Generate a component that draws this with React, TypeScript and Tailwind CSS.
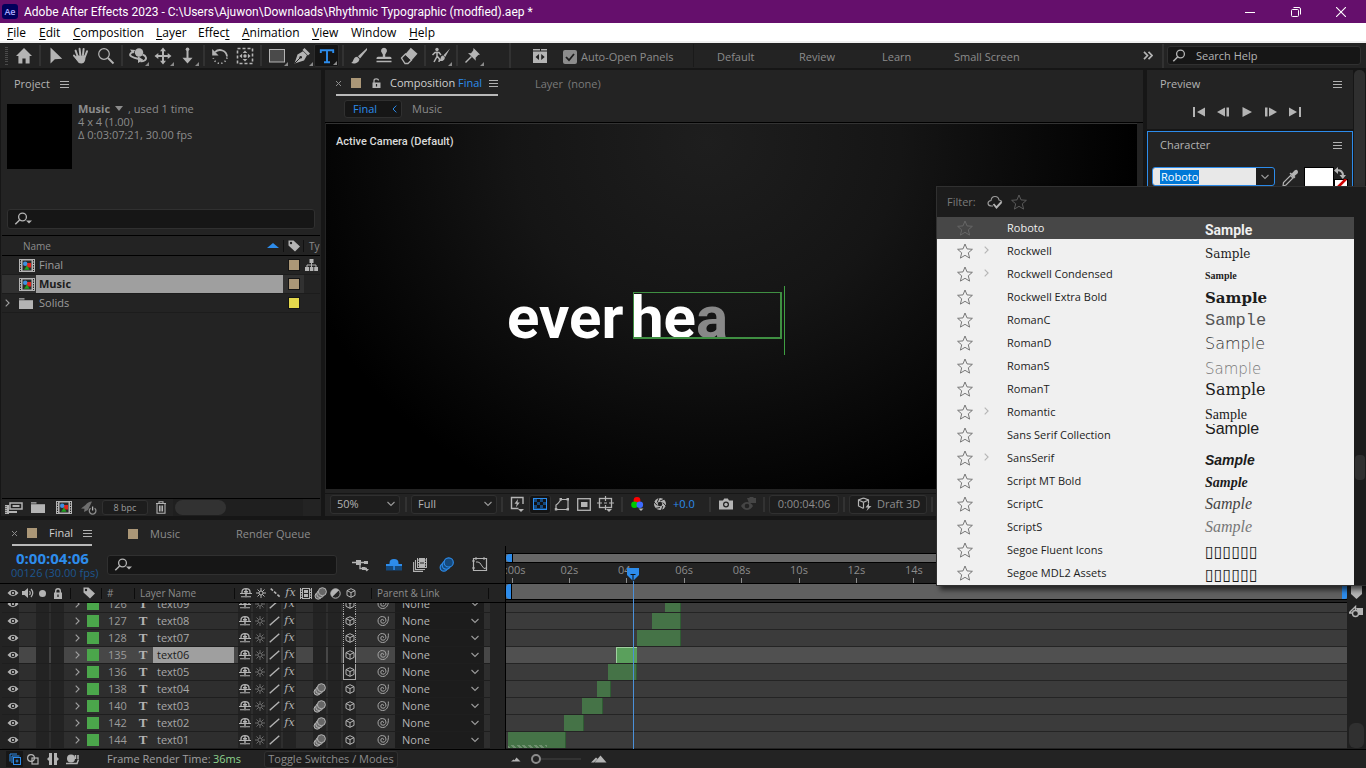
import type { ReactNode } from "react";

/* ---------- icon helpers ---------- */

type IconProps = { className?: string };

function Svg({ w = 16, h = 16, vb, className = "", children }: { w?: number; h?: number; vb?: string; className?: string; children: ReactNode }) {
  return (
    <svg width={w} height={h} viewBox={vb ?? `0 0 ${w} ${h}`} className={`shrink-0 ${className}`} fill="none" stroke="none" aria-hidden="true">
      {children}
    </svg>
  );
}

const HomeIcon = () => (
  <Svg w={18} h={18}><path d="M9 1 1 9h2.4v7.5h4v-5h3.2v5h4V9H17Z" fill="#b4b4b4" /></Svg>
);
const ArrowIcon = () => (
  <Svg w={18} h={18}><path d="M3.5 0.5v16l4.3-4.3 7.4-.5Z" fill="#b4b4b4" /></Svg>
);
const HandIcon = () => (
  <Svg w={18} h={18}>
    <path d="M5.5 9 3.6 3.6M8.3 8 7.6 1.8M11 8l.6-6M13 9.5l2-5.2M5.5 12.5 2 8.6" stroke="#b4b4b4" strokeWidth="2" strokeLinecap="round" />
    <path d="M4.6 8.4h9.2l-.6 4.6q-1 3.6-4 3.6-2.800 0-4-2.600L3.400 11Z" fill="#b4b4b4" />
  </Svg>
);
const ZoomIcon = () => (
  <Svg w={18} h={18}><circle cx="7" cy="7" r="5.300" stroke="#b4b4b4" strokeWidth="1.200" /><path d="m11 11 5.500 5.500" stroke="#b4b4b4" strokeWidth="2" /></Svg>
);
const OrbitIcon = () => (
  <Svg w={20} h={18}>
    <circle cx="11" cy="5.500" r="4.200" fill="#b4b4b4" />
    <path d="M6 4.500C2 5.500 1 8 3.500 9.500s5 2 7.500 2.500M14.500 7.500c4 1.500 4.500 4.500 2 6q-2 1-4 .7" stroke="#b4b4b4" strokeWidth="1.900" />
    <path d="m10 9.300 5.500 3.700-5.500 3Z M2 2.600 7.200 3 5 6.800Z" fill="#b4b4b4" />
  </Svg>
);
const PanIcon = () => (
  <Svg w={18} h={18}>
    <path d="M9 3v12M3 9h12" stroke="#b4b4b4" strokeWidth="2" />
    <path d="m9 .5 3 3.800H6ZM9 17.500l3-3.800H6ZM.5 9l3.800-3v6ZM17.500 9l-3.800-3v6Z" fill="#b4b4b4" />
  </Svg>
);
const DollyIcon = () => (
  <Svg w={18} h={18}><path d="M8.500 1.500V12" stroke="#b4b4b4" strokeWidth="2" /><path d="m8.500 16.500 5-5.800h-10Z" fill="#b4b4b4" /><circle cx="8.500" cy="2.300" r="1.800" fill="#b4b4b4" /></Svg>
);
const RotateIcon = () => (
  <Svg w={18} h={18}>
    <path d="M4 5.200A7 7 0 0 1 16 9.500" stroke="#b4b4b4" strokeWidth="1.800" />
    <path d="M16 10.500A7 7 0 0 1 2.300 11" stroke="#b4b4b4" strokeWidth="1.600" strokeDasharray="1.300 2.300" />
    <path d="M1.200 2v6.400h6.400Z" fill="#b4b4b4" />
  </Svg>
);
const AnchorIcon = () => (
  <Svg w={18} h={18}>
    <rect x="1.500" y="1.500" width="15" height="15" stroke="#b4b4b4" strokeWidth="1.600" strokeDasharray="3 2" />
    <circle cx="9" cy="9" r="1.700" fill="#b4b4b4" />
    <path d="m9 3.400 2.300 2.700H6.700ZM9 14.600l2.300-2.700H6.700ZM3.400 9l2.700-2.300v4.600ZM14.600 9l-2.700-2.300v4.600Z" fill="#b4b4b4" />
  </Svg>
);
const RectIcon = () => (
  <Svg w={18} h={18}><rect x="1.500" y="2.500" width="15" height="12.500" fill="#4a4a4a" stroke="#b4b4b4" /></Svg>
);
const PenIcon = () => (
  <Svg w={18} h={18}><path d="m1.500 16.500 3-9L10 4.200l4 4-3 5.300Z" fill="#b4b4b4" /><path d="m2 16 5-5" stroke="#232323" /><circle cx="7.700" cy="10.200" r="1.300" fill="#232323" /><path d="m11.500 1 5.500 5.500-2 2L9.500 3Z" fill="#b4b4b4" /></Svg>
);
const TypeIcon = () => (
  <Svg w={16} h={16}><path d="M1.800 5V2.200h12.400V5M8 2.200v12M5 14.300h6" stroke="#2d8ceb" strokeWidth="1.900" /></Svg>
);
const BrushIcon = () => (
  <Svg w={18} h={18}><path d="M17 1 8 9.300l2 2.200L17 3Z" fill="#b4b4b4" /><path d="M7.200 9.800c-4 0-3.200 4.700-6 6.300 4.500 1 8-.8 8.200-4.200Z" fill="#b4b4b4" /></Svg>
);
const StampIcon = () => (
  <Svg w={18} h={18}><path d="M9 .8a3 3 0 0 1 2.200 5l-1 1.700v2.300H15q1.500 0 1.500 1.500V12h-15v-.7q0-1.500 1.500-1.500h4.800V7.500l-1-1.700A3 3 0 0 1 9 .8ZM1.500 13.700h15v1.500h-15Z" fill="#b4b4b4" /></Svg>
);
const EraserIcon = () => (
  <Svg w={18} h={18}><path d="m1.500 11 4-4 6 6-3.500 3.500H5Z" stroke="#b4b4b4" strokeWidth="1.300" /><path d="m5 7.500 5.800-6.700 6.700 6-6 6.700Z" fill="#b4b4b4" /></Svg>
);
const RotoIcon = () => (
  <Svg w={20} h={18}>
    <circle cx="6" cy="2.500" r="1.700" fill="#b4b4b4" />
    <path d="M6 4.500v5L3 15M6 9l2.500 3-.5 3M1.500 8 4 5.500h4l2 2.500" stroke="#b4b4b4" strokeWidth="1.500" />
    <path d="m19 1.500-6.500 6.800 1.700 1.700Z M12 8.500c-3 .5-1.800 4-4 5.500 4 .5 6-1 5.800-3.800Z" fill="#b4b4b4" />
  </Svg>
);
const PinIcon = () => (
  <Svg w={18} h={18}><path d="m9.500 1 6.500 6.500-1.800.6-2.600 2.600.2 3L4 6l3 .2 2.200-2.600Z" fill="#b4b4b4" /><path d="m7.500 9.500-6 6" stroke="#b4b4b4" strokeWidth="1.500" /></Svg>
);
const PanelsIcon = () => (
  <Svg w={16} h={16}><path d="M1 1h7v1.500H1Zm8 0h6v1.500H9ZM1 3.500h14V15H1Z" fill="#b4b4b4" /><path d="m7 6-3.500 3L7 12ZM9.200 6l3.500 3-3.500 3Z" fill="#232323" /></Svg>
);
const SearchIcon = ({ caret = false }: { caret?: boolean }) => (
  <Svg w={20} h={14}>
    <circle cx="8.500" cy="5" r="3.900" stroke="#b4b4b4" strokeWidth="1.300" />
    <path d="m5.600 8-4.300 4.200" stroke="#b4b4b4" strokeWidth="1.500" />
    {caret && <path d="M12 8.500h6l-3 3Z" fill="#b4b4b4" />}
  </Svg>
);
const Burger = () => (
  <Svg w={9} h={9}><path d="M0 1.500h9M0 4.500h9M0 7.500h9" stroke="#b0b0b0" strokeWidth="1" /></Svg>
);
const TagIcon = () => (
  <Svg w={14} h={12}><path d="M1.500.5h5l6.500 6-5 5-6.500-6Z" fill="#b4b4b4" /><circle cx="4" cy="3" r="1.200" fill="#232323" /></Svg>
);
const CompIcon = () => (
  <Svg w={16} h={13}>
    <rect width="16" height="13" fill="#b4b4b4" />
    <path d="M1.500 1v11M14.500 1v11" stroke="#232323" strokeWidth="1" strokeDasharray="1.500 1" />
    <rect x="3.500" y="1.500" width="9" height="10" fill="#2a2a2a" />
    <rect x="7.500" y="4" width="4.500" height="4.500" fill="#e2231a" /><circle cx="6.200" cy="4.800" r="2.200" fill="#3d8fe0" /><path d="m8 6.500 2.500 4.300h-5.500Z" fill="#1fa01f" />
  </Svg>
);
const FolderIcon = () => (
  <Svg w={14} h={11}><path d="M0 .3h5.500V2H14v9H0Z" fill="#b4b4b4" /><path d="M0 1.800h14" stroke="#232323" strokeWidth=".7" /></Svg>
);
const TreeIcon = () => (
  <Svg w={13} h={12}><path d="M4.500 0h4v4h-4ZM0 8h4v4H0ZM4.800 8h3.600v4H4.800ZM9.200 8H13v4H9.200Z" fill="#b4b4b4" /><path d="M6.500 4v4M2 8V6h9v2" stroke="#b4b4b4" /></Svg>
);
const InterpretIcon = () => (
  <Svg w={18} h={12}><path d="M0 3h4v9H0Z" fill="#b4b4b4" /><path d="M1 4v8" stroke="#232323" strokeDasharray="1 1" /><rect x="5" y="1" width="12" height="6" stroke="#b4b4b4" strokeWidth="1.500" /><path d="M7.500 4h7M4 10h8" stroke="#b4b4b4" strokeWidth="2" /></Svg>
);
const RocketIcon = () => (
  <Svg w={18} h={14}><path d="M12 .5Q8 .5 5.500 4L1 7.500l3.500.3L4 11l4-2Z" fill="#6e6e6e" /><path d="M10.600 7.200a3.300 3.300 0 1 0 4 0" stroke="#8c8c8c" strokeWidth="1.300" /><path d="M12.600 5.500v4" stroke="#b4b4b4" strokeWidth="1.300" /></Svg>
);
const TrashIcon = () => (
  <Svg w={12} h={13}><path d="M1 2.500h10M4 2V.7h4V2M2 3v9.300h8V3M4.500 4.500v6M6 4.500v6M7.500 4.500v6" stroke="#b4b4b4" strokeWidth="1.100" /></Svg>
);
const Chevron = ({ className = "" }: IconProps) => (
  <Svg w={8} h={6} className={className}><path d="m.5 1 3.500 3.500L7.500 1" stroke="#9a9a9a" strokeWidth="1.100" /></Svg>
);
const ChevronRight = ({ color = "#a0a0a0" }: { color?: string }) => (
  <Svg w={5} h={8}><path d="m.7.600 3.400 3.400L.7 7.400" stroke={color} strokeWidth="1.100" /></Svg>
);
const StarIcon = ({ color }: { color: string }) => (
  <Svg w={16} h={16}><path d="m8 1 2 4.900 5.400.4-4.100 3.500 1.300 5.300L8 12.300l-4.600 2.800 1.300-5.300L.6 6.300 6 5.900Z" stroke={color} strokeWidth="1" /></Svg>
);
const CubeIcon = () => (
  <Svg w={10} h={10}><path d="M5 .7 9 2.600v4.800L5 9.300 1 7.400V2.600ZM1 2.600l4 2 4-2M5 4.600v4.700" stroke="#b4b4b4" /></Svg>
);
const EyeIcon = () => (
  <Svg w={12} h={8}><path d="M.5 4Q3 .8 6 .8T11.500 4Q9 7.200 6 7.200T.5 4Z" fill="#b4b4b4" /><circle cx="6" cy="4" r="2.300" fill="#232323" /><circle cx="6" cy="4" r="1" fill="#d0d0d0" /></Svg>
);
const ShyIcon = ({ color = "#b4b4b4" }: { color?: string }) => (
  <Svg w={12} h={10}><path d="M2 5V4q0-3.300 4-3.300T10 4v1" stroke={color} strokeWidth="1.300" /><path d="M4 3h4v1.500H4ZM5.300 1h1.400v8.500H5.300Z" fill={color} /><path d="M0 5.500h12M1 8.800h4M7 8.800h4" stroke={color} strokeWidth="1.100" /></Svg>
);
const SunIcon = ({ color }: { color: string }) => (
  <Svg w={10} h={10}><path d="M5 0v10M0 5h10M1.500 1.500l7 7M8.500 1.500l-7 7" stroke={color} /><circle cx="5" cy="5" r="2" fill="#232323" stroke={color} /></Svg>
);
const SlashIcon = () => (<Svg w={11} h={10}><path d="M.7 9.300 10.300.7" stroke="#b4b4b4" strokeWidth="1.400" /></Svg>);
const QualityIcon = () => (<Svg w={11} h={10}><path d="m.7.700 9.600 8.600" stroke="#b4b4b4" strokeWidth="1.600" strokeDasharray="3 1.500" /></Svg>);
const BlurIcon = ({ stroke = "#b4b4b4", fill = "#666666", size = 13 }: { stroke?: string; fill?: string; size?: number }) => (
  <Svg w={size} h={size} vb="0 0 13 13"><circle cx="4.200" cy="9" r="3.200" fill={fill} stroke={stroke} /><circle cx="6.300" cy="7" r="3.600" fill={fill} stroke={stroke} /><circle cx="8.400" cy="4.700" r="4" fill={fill} stroke={stroke} /></Svg>
);
const FilmIcon = () => (
  <Svg w={12} h={11}><rect x="0" y="0" width="12" height="11" fill="#b4b4b4" /><path d="M1.500 0v11M10.500 0v11" stroke="#232323" strokeDasharray="1.500 1" /><rect x="3.500" y="1.500" width="5" height="8" stroke="#232323" /><path d="M4 5.500h4" stroke="#232323" /></Svg>
);
const AdjustIcon = () => (<Svg w={11} h={11}><circle cx="5.500" cy="5.500" r="4.700" stroke="#b4b4b4" /><path d="M9 2.200A4.700 4.700 0 0 0 2.200 9Z" fill="#b4b4b4" /></Svg>);
const SpeakerIcon = () => (<Svg w={12} h={10}><path d="M0 3h2.500L6 0v10L2.500 7H0Z" fill="#b4b4b4" /><path d="M7.500 3q1.500 2 0 4M9 1q3.500 4 0 8" stroke="#b4b4b4" strokeWidth="1.200" /></Svg>);
const LockIcon = () => (<Svg w={10} h={11}><path d="M1 4.500h8V11H1Z" fill="#b4b4b4" /><path d="M2.700 5V3q0-2.200 2.300-2.200T7.300 3v2" stroke="#b4b4b4" strokeWidth="1.400" /><path d="M5 6.500v2.500" stroke="#232323" strokeWidth="1.300" /></Svg>);
const UnlockIcon = () => (<Svg w={9} h={11}><path d="M.5 4.500h8V10h-8Z" fill="#b4b4b4" /><path d="M2 5V2.800Q2 .8 4.200.8T6.500 2.500" stroke="#b4b4b4" strokeWidth="1.200" /><path d="M4.500 6v2.500" stroke="#232323" strokeWidth="1.200" /></Svg>);
const SwirlIcon = () => (
  <Svg w={12} h={12}><path d="M11.300 1.500c.5 5-1.500 9-5.600 9A4.600 4.600 0 0 1 1 6a4.200 4.200 0 0 1 4.300-4.500A3.600 3.600 0 0 1 9 5c0 2-1.300 3.200-3 3.200A2 2 0 0 1 3.800 6q0-1.500 1.500-1.700 1.300 0 1.300 1.500" stroke="#a4a4a4" /></Svg>
);
const Mountain = ({ big = false }: { big?: boolean }) => big
  ? <Svg w={16} h={8}><path d="m0 7.500 5-5 1.500 1.200L3 7.500ZM3.500 7.500 9.500.5l6 7Z" fill="#b4b4b4" /></Svg>
  : <Svg w={10} h={5}><path d="m0 4.500 2.500-2 1 .7L5.500.5l4 4Z" fill="#b4b4b4" /></Svg>;

/* ---------- shared pieces ---------- */

const Sep = ({ width = "w-[10px]" }: { width?: string }) => (
  <span className={`flex shrink-0 justify-center ${width}`}><span className="h-[15px] w-[2px] bg-[#323232]" /></span>
);

function IconButton({ label, className = "w-[22px]", children }: { label: string; className?: string; children?: ReactNode }) {
  return <button type="button" aria-label={label} className={`flex shrink-0 items-center justify-center ${className}`}>{children}</button>;
}

const Corner = () => <svg width="4" height="4" viewBox="0 0 4 4" className="absolute right-[1px] bottom-[1px]" aria-hidden="true"><path d="M4 0v4H0Z" fill="#8a8a8a" /></svg>;

function Tool({ label, corner, active, children }: { label: string; corner?: boolean; active?: boolean; children: ReactNode }) {
  return (
    <button type="button" aria-label={label} className={`relative flex h-[23px] w-[25px] shrink-0 items-center justify-center ${active ? "rounded-[2px] border border-[#2c2c2c] bg-[#141414]" : ""}`}>
      {children}
      {corner && <Corner />}
    </button>
  );
}

const ToolSep = () => <span className="flex w-[7px] shrink-0 justify-center"><span className="h-[21px] w-[2px] bg-[#323232]" /></span>;

function TitleBar() {
  return (
    <header className="flex h-[23px] shrink-0 items-center bg-[#650f6c] text-[12px] text-white">
      <span className="ml-[2px] flex h-[15px] w-[16px] items-center justify-center rounded-[3px] bg-[#00005b] text-[9px] font-semibold text-[#a9a9ff]">Ae</span>
      <h1 className="ml-[6px] flex-1 truncate font-['Roboto',sans-serif]">Adobe After Effects 2023 - C:\Users\Ajuwon\Downloads\Rhythmic Typographic (modfied).aep *</h1>
      <IconButton label="Minimize" className="w-[46px]"><Svg w={10} h={10}><path d="M0 5.500h10" stroke="#fff" /></Svg></IconButton>
      <IconButton label="Restore" className="w-[45px]"><Svg w={10} h={10}><rect x=".5" y="2.500" width="7" height="7" rx="1" stroke="#fff" /><path d="M2.500.5H8q1.500 0 1.500 1.500v5.500" stroke="#fff" /></Svg></IconButton>
      <IconButton label="Close" className="mr-[2px] w-[46px]"><Svg w={10} h={10}><path d="m0 0 10 10M10 0 0 10" stroke="#fff" strokeWidth="1.100" /></Svg></IconButton>
    </header>
  );
}

const menus: [string, string, string, string][] = [
  ["", "F", "ile", "w-[32px]"], ["", "E", "dit", "w-[34px]"], ["", "C", "omposition", "w-[83px]"], ["", "L", "ayer", "w-[42px]"],
  ["Effec", "t", "", "w-[44px]"], ["", "A", "nimation", "w-[70px]"], ["", "V", "iew", "w-[39px]"], ["", "W", "indow", "w-[58px]"], ["", "H", "elp", "w-[40px]"],
];

function MenuBar() {
  return (
    <nav className="flex h-[20px] shrink-0 items-center border-b-2 border-[#f0f0f0] bg-white pt-[2px] pl-[7px] text-[12px] text-black">
      {menus.map(([a, b, c, w]) => (
        <button key={a + b + c} type="button" className={`shrink-0 text-left whitespace-nowrap ${w}`}>
          {a}{b === "W" ? b : <span className="underline underline-offset-2">{b}</span>}{c}
        </button>
      ))}
    </nav>
  );
}

function ToolBar() {
  return (
    <div className="flex h-[25px] shrink-0 items-center bg-[#232323]">
      <span className="mr-[3px] ml-[5px] flex h-[18px] w-[3px] shrink-0 flex-col justify-between">
        {Array.from({ length: 9 }, (_, i) => <span key={i} className="h-px w-[3px] bg-[#4a4a4a]" />)}
      </span>
      <Tool label="Home"><HomeIcon /></Tool>
      <ToolSep />
      <Tool label="Selection tool"><ArrowIcon /></Tool>
      <Tool label="Hand tool"><HandIcon /></Tool>
      <Tool label="Zoom tool"><ZoomIcon /></Tool>
      <ToolSep />
      <Tool label="Orbit tool" corner><OrbitIcon /></Tool>
      <Tool label="Pan tool" corner><PanIcon /></Tool>
      <Tool label="Dolly tool" corner><DollyIcon /></Tool>
      <ToolSep />
      <Tool label="Rotation tool"><RotateIcon /></Tool>
      <Tool label="Anchor point tool"><AnchorIcon /></Tool>
      <ToolSep />
      <Tool label="Rectangle tool" corner><RectIcon /></Tool>
      <Tool label="Pen tool" corner><PenIcon /></Tool>
      <Tool label="Type tool" corner active><TypeIcon /></Tool>
      <ToolSep />
      <Tool label="Brush tool"><BrushIcon /></Tool>
      <Tool label="Clone stamp tool"><StampIcon /></Tool>
      <Tool label="Eraser tool"><EraserIcon /></Tool>
      <ToolSep />
      <Tool label="Roto brush tool" corner><RotoIcon /></Tool>
      <ToolSep />
      <Tool label="Puppet pin tool" corner><PinIcon /></Tool>
      <span className="ml-[24px] h-[25px] w-[2px] shrink-0 bg-[#323232]" />
      <IconButton label="Panel layout" className="ml-[17px] w-[24px]"><PanelsIcon /></IconButton>
      <label className="ml-[11px] flex w-[130px] shrink-0 items-center gap-[4px] pt-[2px] whitespace-nowrap text-[#8c8c8c]">
        <span className="relative flex h-[14px] w-[14px]">
          <input type="checkbox" defaultChecked className="h-[14px] w-[14px] appearance-none rounded-[2px] bg-[#8c8c8c]" />
          <svg width="14" height="14" viewBox="0 0 14 14" fill="none" className="pointer-events-none absolute inset-0" aria-hidden="true"><path d="m3 7 3 3.200L11 4" stroke="#1d1d1d" strokeWidth="1.800" /></svg>
        </span>
        Auto-Open Panels
      </label>
      <span className="h-[23px] w-px shrink-0 bg-[#1a1a1a]" />
      <div className="flex flex-1 pt-[2px] pl-[23px] text-[#8c8c8c]">
        <button type="button" className="w-[82px] text-left">Default</button>
        <button type="button" className="w-[83px] text-left">Review</button>
        <button type="button" className="w-[72px] text-left">Learn</button>
        <button type="button" className="text-left whitespace-nowrap">Small Screen</button>
      </div>
      <IconButton label="More workspaces" className="w-[20px]"><Svg w={10} h={9}><path d="m1 .8 3.500 3.700L1 8.200M5.500.8 9 4.500 5.500 8.200" stroke="#b4b4b4" strokeWidth="1.700" /></Svg></IconButton>
      <span className="ml-[4px] h-[24px] w-[2px] shrink-0 bg-[#323232]" />
      <label className="mr-[5px] ml-[3px] flex h-[19px] w-[194px] shrink-0 items-center rounded-[3px] border border-[#303030] bg-[#161616] pl-[4px]">
        <SearchIcon />
        <input aria-label="Search Help" placeholder="Search Help" className="ml-[4px] w-[140px] bg-transparent text-[#b4b4b4] outline-none placeholder:text-[#b4b4b4]" />
      </label>
    </div>
  );
}

const items = [
  { name: "Final", icon: "comp", swatch: "bg-[#ab9777]" },
  { name: "Music", icon: "comp", swatch: "bg-[#ab9777]" },
  { name: "Solids", icon: "folder", swatch: "bg-[#e4d84c]" },
];

function ProjectPanel() {
  return (
    <section aria-label="Project" className="flex w-[320px] shrink-0 flex-col bg-[#232323]">
      <div className="flex h-[28px] shrink-0 items-center pl-[13px]">
        <h2 className="w-[45px] text-[#b4b4b4]">Project</h2>
        <IconButton label="Project menu" className="w-[11px]"><Burger /></IconButton>
      </div>
      <div className="mt-[4px] flex pl-[6px]">
        <div className="mt-[2px] h-[65px] w-[65px] bg-black" />
        <div className="ml-[6px] leading-[13px] text-[#8c8c8c]">
          <p className="flex items-center"><b className="font-bold">Music</b><Svg w={8} h={5} className="mx-[5px]"><path d="M0 0h8L4 5Z" fill="#8c8c8c" /></Svg>, used 1 time</p>
          <p>4 x 4 (1.00)</p>
          <p>Δ 0:03:07:21, 30.00 fps</p>
        </div>
      </div>
      <label className="mx-[6px] mt-[40px] flex h-[20px] items-center rounded-[3px] border border-[#303030] bg-[#161616] pl-[6px]">
        <SearchIcon caret />
        <input aria-label="Search project" className="w-full bg-transparent outline-none" />
      </label>
      <table className="mx-[1px] mt-[6px] table-fixed border-collapse text-left">
        <colgroup><col className="w-[16px]" /><col className="w-[18px]" /><col /><col className="w-[21px]" /><col className="w-[16px]" /></colgroup>
        <thead>
          <tr className="h-[20px] border-y border-black text-[10px] text-[#8c8c8c]">
            <th />
            <th colSpan={2} className="p-0 pl-[5px] font-normal"><span className="flex items-center justify-between">Name<Svg w={12} h={5} className="mr-[4px]"><path d="M0 5h12L6 0Z" fill="#2d8ceb" /></Svg></span></th>
            <th className="p-0"><span className="flex items-center justify-center border-x border-[#111]"><TagIcon /></span></th>
            <th className="overflow-hidden p-0 pl-[5px] font-normal">Ty</th>
          </tr>
        </thead>
        <tbody>
          {items.map((it, i) => (
            <tr key={it.name} className={`h-[19px] border-b border-[#1c1c1c] ${i === 1 ? "bg-[#313131]" : ""}`}>
              <td className="p-0 pl-[3px]">{it.icon === "folder" && <ChevronRight />}</td>
              <td className="p-0 pl-px">{it.icon === "folder" ? <FolderIcon /> : <CompIcon />}</td>
              <td className="p-0"><span className={`block h-[18px] pl-[3px] leading-[18px] ${i === 1 ? "bg-[#9f9f9f] font-bold text-[#1c1c1c]" : "text-[#9c9c9c]"}`}>{it.name}</span></td>
              <td className="p-0"><span className={`mx-auto block h-[10px] w-[10px] outline outline-[#151515] ${it.swatch}`} /></td>
              <td className="bg-[#232323] p-0 pl-px">{i === 0 && <TreeIcon />}</td>
            </tr>
          ))}
        </tbody>
      </table>
      <div className="flex-1" />
      <div className="mx-[1px] flex h-[18px] shrink-0 items-center border-t border-black">
        <IconButton label="Interpret footage" className="w-[23px]"><InterpretIcon /></IconButton>
        <IconButton label="New folder" className="w-[26px]"><FolderIcon /></IconButton>
        <IconButton label="New composition" className="w-[25px]"><CompIcon /></IconButton>
        <IconButton label="Render engine" className="w-[26px]"><RocketIcon /></IconButton>
        <button type="button" className="h-[15px] w-[46px] rounded-[3px] border border-[#303030] bg-[#1d1d1d] text-[9px] leading-[14px] text-[#9c9c9c]">8 bpc</button>
        <IconButton label="Delete" className="w-[25px]"><TrashIcon /></IconButton>
        <div className="flex h-[17px] w-[130px] items-center bg-[#1f1f1f] pl-[2px]"><span className="h-[15px] w-[51px] rounded-full bg-[#323232]" /></div>
      </div>
    </section>
  );
}

function FooterSelect({ label, value, className }: { label: string; value: string; className: string }) {
  return (
    <span className={`relative flex h-[19px] shrink-0 items-center rounded-[3px] border border-[#303030] bg-[#1d1d1d] ${className}`}>
      <select aria-label={label} defaultValue={value} className="w-full appearance-none bg-transparent pl-[6px] text-[#b4b4b4] outline-none"><option>{value}</option></select>
      <Chevron className="pointer-events-none absolute right-[4px]" />
    </span>
  );
}

const MiniCaret = "M9 13h6l-3 3Z";

function CompositionPanel() {
  return (
    <section aria-label="Composition" className="flex min-w-0 flex-1 flex-col bg-[#232323]">
      <div className="flex h-[26px] shrink-0 items-stretch pl-[11px]">
        <div className="flex w-[162px] items-center border-b-2 border-[#b9b9b9] pt-[2px]">
          <IconButton label="Close tab" className="w-[5px]"><Svg w={5} h={5}><path d="m0 0 5 5M5 0 0 5" stroke="#8c8c8c" /></Svg></IconButton>
          <span className="ml-[10px] h-[10px] w-[10px] bg-[#ab9777]" />
          <span className="ml-[11px]"><UnlockIcon /></span>
          <span className="ml-[9px] flex-1 whitespace-nowrap text-[#cfcfcf]">Composition <span className="text-[#2d8ceb]">Final</span></span>
          <IconButton label="Composition menu" className="w-[9px]"><Burger /></IconButton>
        </div>
        <span className="ml-[37px] pt-[6px] text-[#7a7a7a]">Layer <span className="ml-[2px]">(none)</span></span>
      </div>
      <div className="flex h-[26px] shrink-0 items-center pl-[19px]">
        <button type="button" className="flex h-[18px] w-[58px] items-center justify-between rounded-[3px] border border-[#303030] bg-[#161616] pr-[4px] pl-[8px] text-[#2d8ceb]">Final<Svg w={5} h={8}><path d="M4.300.6 1 4l3.300 3.400" stroke="#2d8ceb" /></Svg></button>
        <button type="button" className="ml-[10px] text-[#8c8c8c]">Music</button>
      </div>
      <div className="flex min-h-0 flex-1 border-t border-black">
        <div className="relative ml-[1px] min-w-0 flex-1 overflow-hidden border-t border-[#333] bg-[radial-gradient(ellipse_430px_390px_at_47%_5%,#1e1e1e_0%,#151515_45%,#000_100%)]">
          <p className="absolute top-[10px] left-[10px] font-['Roboto',sans-serif] font-medium text-[#dadada]">Active Camera (Default)</p>
          <p className="absolute top-[157px] left-[181px] font-['Roboto',sans-serif] text-[60px] leading-[74px] font-bold whitespace-nowrap text-white">ever</p>
          <p className="absolute top-[157px] left-[304px] font-['Roboto',sans-serif] text-[60px] leading-[74px] font-bold whitespace-nowrap text-white">he<span className="text-[#888]">a</span></p>
          <div className="absolute top-[168px] left-[307px] h-[47px] w-[149px] border border-r-2 border-b-2 border-[#3f8f42]" />
          <div className="absolute top-[162px] left-[458px] h-[69px] w-px bg-[#3f9f42]" />
        </div>
        <div className="w-[6px] shrink-0" />
      </div>
      <div className="mt-[4px] flex h-[23px] shrink-0 items-center overflow-hidden border-t border-[#161616] pb-[2px] pl-[5px]">
        <FooterSelect label="Magnification" value="50%" className="w-[70px]" />
        <Sep width="w-[11px]" />
        <FooterSelect label="Resolution" value="Full" className="w-[86px]" />
        <Sep />
        <IconButton label="Fast previews"><Svg w={18} h={17}><path d="M14 8V1.500H2.500v11h7" stroke="#b4b4b4" strokeWidth="1.400" /><path d="m9 3-3.500 4.800h2.300L6.800 11.500l4-5H8.500Z" fill="#b4b4b4" /><path d={MiniCaret} fill="#b4b4b4" /></Svg></IconButton>
        <span className="flex h-[19px] w-[22px] items-center justify-center rounded-[3px] border border-[#303030] bg-[#141414]">
          <Svg w={14} h={12}><rect x=".5" y=".5" width="13" height="11" fill="#15497c" stroke="#2d8ceb" /><path d="M4 1h3v3H4ZM10 1h3v3h-3ZM1 4h3v3H1ZM7 4h3v3H7ZM4 7h3v3H4ZM10 7h3v3h-3Z" fill="#111" /></Svg>
        </span>
        <IconButton label="Mask visibility"><Svg w={16} h={15}><path d="M2 12.500V8q2-1 5-5.500M7 2.500h7v10H2" stroke="#b4b4b4" strokeWidth="1.200" /><path d="M5.500 1h2.500v2.500H5.500ZM12.500 1H15v2.500h-2.500ZM.8 11h2.500v2.500H.8ZM12.500 11H15v2.500h-2.500Z" fill="#b4b4b4" /></Svg></IconButton>
        <IconButton label="Region of interest"><Svg w={14} h={13}><rect x=".7" y=".7" width="12.600" height="11.600" stroke="#b4b4b4" strokeWidth="1.300" /><rect x="4" y="4" width="6.500" height="5" fill="#b4b4b4" /></Svg></IconButton>
        <IconButton label="Grid and guides"><Svg w={18} h={17}><rect x="2.500" y="2.500" width="12" height="9" stroke="#b4b4b4" strokeWidth="1.300" /><path d="M8.500 0v5M8.500 9v5M0 7h5M12 7h5M7 7h3" stroke="#b4b4b4" strokeWidth="1.200" /><path d={MiniCaret} fill="#b4b4b4" /></Svg></IconButton>
        <Sep />
        <IconButton label="Channels"><Svg w={16} h={16}><circle cx="7" cy="4.500" r="3.400" fill="#f00" /><circle cx="4.500" cy="8.800" r="3.300" fill="#00c800" /><circle cx="9.800" cy="8.800" r="3.300" fill="#3d6bff" /><path d="M8.500 12.500h5L11 15Z" fill="#b4b4b4" /></Svg></IconButton>
        <IconButton label="Reset exposure"><Svg w={14} h={14}><circle cx="7" cy="7" r="6" fill="#b4b4b4" /><path d="M7 4 11.500 2M9.800 5.500 13 9M9.800 9 8.500 13M7 10.500 2 11.500M4.200 8.500 1 5M4.200 5.500 6 1" stroke="#232323" /><circle cx="7" cy="7" r="2.300" fill="#232323" /></Svg></IconButton>
        <span className="w-[34px] shrink-0 pl-[2px] text-[#2d8ceb]">+0.0</span>
        <Sep />
        <IconButton label="Take snapshot"><Svg w={14} h={12}><path d="M0 2.500h4L5.200.5h3.600L10 2.500h4V11.500H0Z" fill="#b4b4b4" /><circle cx="7" cy="6.500" r="3" fill="#232323" /><circle cx="7" cy="6.500" r="1.700" fill="#b4b4b4" /></Svg></IconButton>
        <IconButton label="Show snapshot"><Svg w={16} h={14}><path d="M7 1h2l1-1h3l1 1h2v5H9" fill="#454545" /><path d="M1 9q2.500-4 6-4t6 4q-2.500 4-6 4T1 9Z" fill="#454545" /><circle cx="7" cy="9" r="2.300" fill="#232323" /></Svg></IconButton>
        <Sep />
        <button type="button" className="h-[19px] w-[70px] shrink-0 rounded-[3px] border border-[#303030] bg-[#1d1d1d] leading-[16px] text-[#8c8c8c]">0:00:04:06</button>
        <Sep />
        <button type="button" className="flex h-[19px] w-[78px] shrink-0 items-center gap-[5px] rounded-[3px] border border-[#303030] bg-[#1d1d1d] pl-[7px] whitespace-nowrap text-[#8c8c8c]"><Svg w={15} h={14}><path d="M6.500 1 11.500 3v3.500M6.500 1 1.500 3v6l5 2.500M1.500 3l5 2.300L11.500 3M6.500 5.300v6" stroke="#b4b4b4" strokeWidth="1.200" /><path d="m12 6-3.500 4.500h2.500L9.500 14l5-5h-2.500Z" fill="#b4b4b4" /></Svg>Draft 3D</button>
        <Sep />
      </div>
    </section>
  );
}

function RightPanels() {
  return (
    <div className="flex w-[219px] shrink-0">
      <div className="flex w-[206px] flex-col">
        <section aria-label="Preview" className="h-[59px] shrink-0 bg-[#232323]">
          <div className="flex h-[28px] items-center justify-between pr-[11px] pl-[13px]">
            <h2 className="text-[#b4b4b4]">Preview</h2>
            <IconButton label="Preview menu" className="w-[9px]"><Burger /></IconButton>
          </div>
          <div className="flex justify-center pt-[9px] pr-[6px]">
            <IconButton label="First frame" className="w-[24px]"><Svg w={12} h={10}><path d="M0 0h2v10H0ZM12 .5v9L4 5Z" fill="#b4b4b4" /></Svg></IconButton>
            <IconButton label="Previous frame" className="w-[24px]"><Svg w={12} h={10}><path d="M8 .5v9L0 5ZM9.500.5h2.500v9H9.500Z" fill="#b4b4b4" /></Svg></IconButton>
            <IconButton label="Play" className="w-[24px]"><Svg w={10} h={10}><path d="M.5 0v10L10 5Z" fill="#b4b4b4" /></Svg></IconButton>
            <IconButton label="Next frame" className="w-[24px]"><Svg w={12} h={10}><path d="M4 .5v9L12 5ZM0 .5h2.500v9H0Z" fill="#b4b4b4" /></Svg></IconButton>
            <IconButton label="Last frame" className="w-[24px]"><Svg w={12} h={10}><path d="M10 0h2v10h-2ZM0 .5v9L8 5Z" fill="#b4b4b4" /></Svg></IconButton>
          </div>
        </section>
        <section aria-label="Character" className="mt-[2px] min-h-0 flex-1 overflow-hidden border border-[#2d8ceb] bg-[#232323]">
          <div className="flex h-[26px] items-center justify-between pr-[10px] pl-[12px]">
            <h2 className="text-[#b4b4b4]">Character</h2>
            <IconButton label="Character menu" className="w-[9px]"><Burger /></IconButton>
          </div>
          <div className="mt-[9px] flex pl-[4px]">
            <div className="flex h-[19px] w-[123px] items-center rounded-[3px] border border-[#2d8ceb] bg-[#1d1d1d]">
              <div className="flex h-full flex-1 items-center rounded-l-[2px] bg-[#e8e8e8] pl-[7px]">
                <input aria-label="Font family" defaultValue="Roboto" className="w-[39px] bg-[#0078d7] pl-px leading-[14px] text-white outline-none" />
              </div>
              <IconButton label="Show fonts" className="w-[18px]"><Chevron /></IconButton>
            </div>
            <IconButton label="Eyedropper" className="ml-[5px] w-[18px]"><Svg w={17} h={18}><path d="m2 17 .5-3.500 7-7 2.500 2.500-7 7Z" stroke="#b4b4b4" strokeWidth="1.200" /><path d="m8.500 4.500 1.300-1 1 1 2.700-3q2-1.500 3 0t0 3l-3 2.500 1 1-1.500 1.500Z" fill="#b4b4b4" /></Svg></IconButton>
            <div className="ml-[6px] h-[22px] w-[30px] shrink-0 border border-black bg-white" />
            <div className="flex flex-col"><Svg w={12} h={12}><path d="M2.500 3.500q6.500-1 6.500 5.500" stroke="#b4b4b4" strokeWidth="2" /><path d="M0 3.500 4 0v7ZM5.500 8h6.500l-3.200 4Z" fill="#b4b4b4" /></Svg><Svg w={14} h={10}><rect width="14" height="10" fill="#fff" stroke="#000" strokeWidth="2" /><path d="m4 8 8-8" stroke="#d00000" strokeWidth="2.500" /></Svg></div>
          </div>
        </section>
      </div>
      <div className="ml-[1px] w-[11px] rounded-t-[5px] bg-[#2f2f2f]" />
    </div>
  );
}

const fonts: { name: string; more?: boolean; sample: string; cls: string }[] = [
  { name: "Roboto", sample: "Sample", cls: "font-['Roboto',sans-serif] text-[14px] font-bold pt-[3px]" },
  { name: "Rockwell", more: true, sample: "Sample", cls: "font-['DejaVu_Serif',serif] text-[12px] pt-[5px]" },
  { name: "Rockwell Condensed", more: true, sample: "Sample", cls: "font-['Liberation_Serif',serif] text-[10px] font-bold pt-[4px]" },
  { name: "Rockwell Extra Bold", sample: "Sample", cls: "font-['DejaVu_Serif',serif] text-[15px] font-bold pt-[2px]" },
  { name: "RomanC", sample: "Sample", cls: "font-['Liberation_Mono',monospace] text-[17px] text-[#555] pt-[2px]" },
  { name: "RomanD", sample: "Sample", cls: "font-['DejaVu_Sans',sans-serif] text-[16px] font-extralight text-[#333] pt-[2px]" },
  { name: "RomanS", sample: "Sample", cls: "font-['DejaVu_Sans',sans-serif] text-[15px] font-extralight text-[#777] pt-[5px]" },
  { name: "RomanT", sample: "Sample", cls: "font-['DejaVu_Serif',serif] text-[16px] pt-[2px]" },
  { name: "Romantic", more: true, sample: "Sample", cls: "font-['Liberation_Serif',serif] text-[14px] pt-[6px]" },
  { name: "Sans Serif Collection", sample: "Sample", cls: "font-['Liberation_Sans',sans-serif] text-[16px] pb-[12px]" },
  { name: "SansSerif", more: true, sample: "Sample", cls: "font-['Liberation_Sans',sans-serif] text-[14px] font-bold italic pt-[3px]" },
  { name: "Script MT Bold", sample: "Sample", cls: "font-['Liberation_Serif',serif] text-[14px] font-bold italic pt-[3px]" },
  { name: "ScriptC", sample: "Sample", cls: "font-['Liberation_Serif',serif] text-[16px] italic text-[#444]" },
  { name: "ScriptS", sample: "Sample", cls: "font-['Liberation_Serif',serif] text-[16px] italic text-[#777]" },
  { name: "Segoe Fluent Icons", sample: "▯▯▯▯▯▯", cls: "font-['DejaVu_Sans',sans-serif] text-[16px] pt-[3px]" },
  { name: "Segoe MDL2 Assets", sample: "▯▯▯▯▯▯", cls: "font-['DejaVu_Sans',sans-serif] text-[16px] pt-[3px]" },
];

function FontPopup() {
  return (
    <div className="absolute top-[186px] right-0 z-20 flex w-[430px] flex-col border border-r-0 border-[#303030] bg-[#1c1c1c] shadow-[4px_4px_5px_rgba(0,0,0,0.6)]">
      <div className="flex h-[30px] items-center pl-[10px]">
        <span className="w-[29px] text-[#7a7a7a]">Filter:</span>
        <IconButton label="Show synced fonts" className="ml-[10px] w-[18px]"><Svg w={16} h={14}><path d="M6 11H4Q.8 10.500 1 8q.3-2.200 3-2.500Q4.500 1.500 8 1.500T12 5q2.500.3 2.800 2" stroke="#9c9c9c" strokeWidth="1.100" /><path d="m6.500 9 3 3.500L14.500 7" stroke="#b4b4b4" strokeWidth="1.900" /></Svg></IconButton>
        <IconButton label="Show favorites" className="ml-[7px] w-[16px]"><StarIcon color="#5a5a5a" /></IconButton>
      </div>
      <div className="flex">
        <ul className="flex-1 bg-[#f0f0f0]">
          {fonts.map((f, i) => (
            <li key={f.name}>
              <button type="button" className={`flex h-[23px] w-full items-center overflow-hidden border-b border-[#f0f0f0] pl-[20px] text-left ${i === 0 ? "bg-[#474747] text-[#efefef]" : "text-[#1c1c1c]"}`}>
                <StarIcon color={i === 0 ? "#666" : "#777"} />
                <span className="flex w-[34px] shrink-0 pb-[3px] pl-[11px]">{f.more && <ChevronRight color="#b5b5b5" />}</span>
                <span className="w-[198px] shrink-0">{f.name}</span>
                <span className={`whitespace-nowrap ${f.cls}`}>{f.sample}</span>
              </button>
            </li>
          ))}
        </ul>
        <div className="flex w-[12px] items-center justify-center pt-[132px]"><span className="h-[25px] w-[10px] rounded-[4px] bg-[#303030]" /></div>
      </div>
    </div>
  );
}

/* ---------- timeline ---------- */

type Layer = { n: number; name: string; fx?: boolean; blur?: boolean; link?: "dash" | "solid" | "end"; start: number; length: number; selected?: boolean };

const layers: Layer[] = [
  { n: 126, name: "text09", fx: true, link: "dash", start: 159, length: 16 },
  { n: 127, name: "text08", fx: true, link: "dash", start: 146, length: 29 },
  { n: 128, name: "text07", fx: true, link: "dash", start: 131, length: 44 },
  { n: 135, name: "text06", fx: true, link: "solid", start: 110, length: 21, selected: true },
  { n: 136, name: "text05", fx: true, link: "end", start: 102, length: 29 },
  { n: 138, name: "text04", fx: true, blur: true, start: 91, length: 14 },
  { n: 140, name: "text03", fx: true, blur: true, start: 76, length: 21 },
  { n: 142, name: "text02", fx: true, blur: true, start: 58, length: 20 },
  { n: 144, name: "text01", blur: true, start: 2, length: 58 },
];

const linkClass = { dash: "border-x border-dotted border-[#aaa]", solid: "border-x border-[#aaa]", end: "border-x border-b border-[#aaa]" };

const SwitchCell = ({ children, className = "", plain = false }: { children?: ReactNode; className?: string; plain?: boolean }) => (
  <td className="p-0"><span className={`flex h-[16px] w-[13px] items-center justify-center ${plain ? "" : "bg-[#232323]"} ${className}`}>{children}</span></td>
);

const Fx = () => <i className="font-['DejaVu_Serif',serif] text-[11px] leading-[14px] text-[#b4b4b4]">fx</i>;

function LayerTable() {
  return (
    <table className="ml-[2px] w-[488px] table-fixed border-collapse">
      <colgroup>
        <col className="w-[19px]" /><col className="w-[15px]" /><col className="w-[15px]" /><col className="w-[16px]" /><col className="w-[20px]" />
        <col className="w-[14px]" /><col className="w-[32px]" /><col className="w-[20px]" /><col className="w-[85px]" />
        {Array.from({ length: 8 }, (_, i) => <col key={i} className="w-[15px]" />)}
        <col className="w-[37px]" /><col className="w-[89px]" /><col className="w-[6px]" />
      </colgroup>
      <tbody>
        {layers.map((l) => (
          <tr key={l.n} className={`h-[17px] border-b border-[#1e1e1e] ${l.selected ? "bg-[#474747]" : "bg-[#2e2e2e]"}`}>
            <td className="p-0"><span className="flex h-[16px] w-[17px] items-center justify-end bg-[#232323]"><EyeIcon /></span></td>
            <SwitchCell plain /><SwitchCell /><SwitchCell />
            <td className="p-0 pl-[8px]"><ChevronRight /></td>
            <td className="p-0"><span className="block h-[12px] w-[12px] bg-[#4ba64b]" /></td>
            <td className="p-0 pl-[7px] leading-[16px] text-[#9c9c9c]">{l.n}</td>
            <td className="p-0 text-center font-['Liberation_Serif',serif] text-[13px] leading-[16px] font-bold text-[#b4b4b4]">T</td>
            <td className="p-0 pr-[4px] leading-[16px]"><span className={`block h-[16px] pl-[4px] ${l.selected ? "bg-[#9f9f9f] text-[#1c1c1c]" : "text-[#a8a8a8]"}`}>{l.name}</span></td>
            <SwitchCell><ShyIcon /></SwitchCell>
            <SwitchCell><SunIcon color="#6b6b6b" /></SwitchCell>
            <SwitchCell><SlashIcon /></SwitchCell>
            <SwitchCell>{l.fx && <Fx />}</SwitchCell>
            <SwitchCell plain />
            <SwitchCell>{l.blur && <BlurIcon />}</SwitchCell>
            <SwitchCell />
            <SwitchCell className={l.link ? linkClass[l.link] : ""}><CubeIcon /></SwitchCell>
            <td className="p-0 pl-[19px]"><SwirlIcon /></td>
            <td className="p-0">
              <span className="relative flex h-[16px] items-center bg-[#1c1c1c]">
                <select aria-label={`Parent of ${l.name}`} defaultValue="None" className="w-full appearance-none bg-transparent pl-[7px] leading-[16px] text-[#b4b4b4] outline-none"><option>None</option></select>
                <Chevron className="pointer-events-none absolute right-[5px]" />
              </span>
            </td>
            <td />
          </tr>
        ))}
      </tbody>
    </table>
  );
}

const HSep = () => <span className="h-[11px] w-px shrink-0 bg-[#0c0c0c]" />;
const HCell = ({ children }: { children: ReactNode }) => <span className="flex w-[15px] shrink-0 items-center justify-center">{children}</span>;

const PX_PER_SECOND = 28.7;
const ruler = Array.from({ length: 15 }, (_, i) => i * 2);

function TimelinePanel() {
  return (
    <section aria-label="Timeline" className="mt-[4px] flex h-[248px] shrink-0 flex-col bg-[#232323]">
      <div className="flex h-[26px] shrink-0 items-stretch pl-[12px]">
        <div className="flex w-[80px] items-center border-b-2 border-[#b9b9b9] pt-[2px]">
          <IconButton label="Close tab" className="w-[5px]"><Svg w={5} h={5}><path d="m0 0 5 5M5 0 0 5" stroke="#8c8c8c" /></Svg></IconButton>
          <span className="ml-[10px] h-[10px] w-[10px] bg-[#ab9777]" />
          <span className="ml-[12px] flex-1 text-[#cfcfcf]">Final</span>
          <IconButton label="Timeline menu" className="w-[9px]"><Burger /></IconButton>
        </div>
        <button type="button" className="ml-[36px] flex w-[108px] items-center gap-[12px] pt-[2px] text-[#8c8c8c]"><span className="h-[10px] w-[10px] bg-[#ab9777]" />Music</button>
        <button type="button" className="pt-[2px] whitespace-nowrap text-[#8c8c8c]">Render Queue</button>
      </div>
      <div className="flex min-h-0 flex-1">
        <div className="flex w-[505px] shrink-0 flex-col">
          <div className="flex h-[37px] shrink-0 items-center pl-[11px]">
            <div className="w-[96px]">
              <p className="pl-[5px] text-[15px] leading-[16px] font-bold text-[#2d8ceb]">0:00:04:06</p>
              <p className="text-[11px] leading-[13px] whitespace-nowrap text-[#1d568f]">00126 (30.00 fps)</p>
            </div>
            <label className="flex h-[20px] w-[230px] items-center rounded-[3px] border border-[#303030] bg-[#161616] pl-[6px]">
              <SearchIcon caret />
              <input aria-label="Search layers" className="w-full bg-transparent outline-none" />
            </label>
            <IconButton label="Mini flowchart" className="ml-[10px] w-[26px]"><Svg w={18} h={14}><path d="M1 4.500h5M9 4.500h7M9 4.500v6h7" stroke="#b4b4b4" strokeWidth="1.300" /><path d="M5 2h5v5H5ZM13 3h4v3h-4ZM11 9h3.500v3H11ZM13.500 11h4.500l-2.200 2.500Z" fill="#b4b4b4" /></Svg></IconButton>
            <IconButton label="Hide shy layers" className="ml-[8px] w-[26px]"><Svg w={16} h={13}><path d="M3.500 6V5q0-4 4.500-4t4.500 4v1Z" fill="#2d8ceb" /><path d="M0 6h16v2H0Z" fill="#2d8ceb" /><path d="M0 8h16v4.500H0Z" fill="#15497c" /><path d="M7.300 5h1.500v7H7.300Z" fill="#2d8ceb" /></Svg></IconButton>
            <IconButton label="Frame blending" className="w-[26px]"><Svg w={14} h={14}><path d="M4 0h10v10H4Z" fill="#b4b4b4" /><path d="M5.500 0v10M12.500 0v10" stroke="#232323" strokeDasharray="1.500 1" /><path d="M7 5h4" stroke="#232323" /><path d="M2.500 2v9.500H12M.6 4v9.400H10" stroke="#b4b4b4" strokeWidth="1.100" /></Svg></IconButton>
            <IconButton label="Motion blur" className="w-[26px]"><BlurIcon stroke="#2d8ceb" fill="#15497c" size={15} /></IconButton>
            <IconButton label="Graph editor" className="ml-[8px] w-[26px]"><Svg w={16} h={15}><path d="M1.500 1.500h13v12h-13Z" stroke="#b4b4b4" strokeWidth="1.200" /><path d="M4 5h2q2 0 4 4t4 2M4 0v3M12 0v3M0 4h3M0 11h3" stroke="#b4b4b4" /></Svg></IconButton>
          </div>
          <div className="flex h-[20px] shrink-0 items-center border-y border-black pl-[5px] text-[10px] text-[#8c8c8c]">
            <HCell><EyeIcon /></HCell><HCell><SpeakerIcon /></HCell>
            <HCell><span className="h-[7px] w-[7px] rounded-full bg-[#b4b4b4]" /></HCell>
            <HCell><LockIcon /></HCell>
            <span className="w-[5px]" /><HSep />
            <span className="flex w-[30px] shrink-0 justify-center pl-[6px]"><TagIcon /></span><HSep />
            <span className="w-[32px] shrink-0 pl-[5px]">#</span><HSep />
            <span className="w-[99px] shrink-0 pl-[5px]">Layer Name</span><HSep />
            <span className="w-[3px] shrink-0" />
            <HCell><ShyIcon /></HCell><HCell><SunIcon color="#b4b4b4" /></HCell><HCell><QualityIcon /></HCell><HCell><Fx /></HCell>
            <HCell><FilmIcon /></HCell><HCell><BlurIcon /></HCell><HCell><AdjustIcon /></HCell><HCell><CubeIcon /></HCell>
            <span className="w-[13px] shrink-0" /><HSep />
            <span className="w-[116px] shrink-0 pl-[5px] whitespace-nowrap">Parent &amp; Link</span><HSep />
          </div>
          <div className="flex min-h-0 flex-1 flex-col justify-end overflow-hidden"><LayerTable /></div>
        </div>
        <div className="relative flex min-w-0 flex-1 flex-col overflow-hidden border-l border-black bg-[#232323]">
          <div className="mt-[7px] flex h-[10px] shrink-0 border-y border-black bg-[#676767]"><span className="h-full w-[6px] rounded-l-full bg-[#2d8ceb]" /><span className="w-px bg-black" /></div>
          <div className="relative h-[20px] shrink-0 text-[#8c8c8c]">
            {ruler.map((s) => (
              <span key={s} className="absolute bottom-0 flex h-[20px] w-[40px] -translate-x-1/2 flex-col items-center justify-between leading-[14px]" style={{ left: 6 + s * PX_PER_SECOND }}>
                {s === 0 ? "0:00s" : `${String(s).padStart(2, "0")}s`}
                <span className="h-[5px] w-px bg-[#8c8c8c]" />
              </span>
            ))}
          </div>
          <div className="flex h-[17px] shrink-0 justify-between border-y border-black bg-[#606060]"><span className="h-full w-[6px] rounded-l-[4px] border-r border-black bg-[#2d8ceb]" /><span className="h-full w-[5px] rounded-r-[2px] bg-[#2d8ceb]" /></div>
          <div className="h-[3px] shrink-0 border-b border-black" />
          <div className="flex min-h-0 flex-1 flex-col justify-end overflow-hidden bg-[#333]">
            {layers.map((l) => (
              <div key={l.n} className={`flex h-[17px] shrink-0 border-b border-[#242424] ${l.selected ? "bg-[#505050]" : "bg-[#3b3b3b]"}`}>
                <div className={`h-full shrink-0 ${l.selected ? "border-t border-l border-[#9fd09f] bg-[#5aa05c]" : "border-r border-[#2f5c33] bg-[#457347]"}`} style={{ marginLeft: l.start, width: l.length }}>
                  {l.n === 144 && <div className="mt-[13px] h-[3px] w-[39px] bg-[repeating-linear-gradient(45deg,#6f906f_0_2px,#457347_2px_4px)]" />}
                </div>
              </div>
            ))}
          </div>
          <div className="absolute top-[22px] bottom-0 left-[121px] flex w-[12px] flex-col items-center">
            <Svg w={12} h={13}><path d="M0 0h12v7l-6 6-6-6Z" fill="#2d8ceb" /><path d="M3.500 6.500h5M6 6.500V13" stroke="#111" /></Svg>
            <span className="w-px flex-1 bg-[#4a90d9]" />
          </div>
        </div>
        <div className="flex w-[19px] shrink-0 flex-col items-center bg-[#202020] pt-[40px]">
          <IconButton label="Marker bin" className="h-[13px] w-[12px]"><Svg w={12} h={13}><path d="M0 0h11v8l-5.500 5L0 8Z" fill="#b4b4b4" /></Svg></IconButton>
          <IconButton label="Layer bin" className="mt-[6px] w-[16px]"><Svg w={16} h={13}><path d="M7 3h7v7h-4" fill="#b4b4b4" /><path d="M0 8 6.500 1.500V6M0 8h4" stroke="#b4b4b4" strokeWidth="1.400" /><circle cx="6.500" cy="8.500" r="3" fill="#232323" stroke="#b4b4b4" strokeWidth="1.400" /></Svg></IconButton>
          <span className="mt-auto mb-px h-[25px] w-[15px] rounded-[6px] bg-[#303030]" />
        </div>
      </div>
      <footer className="flex h-[19px] shrink-0 items-center border-t border-black pl-[6px]">
        <IconButton label="Toggle layer switches" className="h-[16px] w-[17px] bg-[#161616]"><Svg w={12} h={12}><path d="M1 8.500V1h7M3 10V3h7.500" stroke="#2d8ceb" /><rect x="4.500" y="4.500" width="7" height="7" stroke="#2d8ceb" /><path d="M6.500 8h3M8 6.500v3" stroke="#2d8ceb" /></Svg></IconButton>
        <IconButton label="Toggle transfer controls" className="w-[20px]"><Svg w={12} h={11}><circle cx="4" cy="4" r="3.400" stroke="#b4b4b4" strokeWidth="1.200" /><rect x="5" y="4" width="6" height="6" stroke="#b4b4b4" strokeWidth="1.200" /></Svg></IconButton>
        <IconButton label="Toggle in and out" className="w-[19px]"><Svg w={12} h={12}><path d="M2 0h3v12H2V8L0 6l2-2ZM7 0h3v4l2 2-2 2v4H7Z" fill="#b4b4b4" /></Svg></IconButton>
        <IconButton label="Toggle render time" className="w-[20px]"><Svg w={13} h={11}><circle cx="5" cy="4.500" r="4" fill="#b4b4b4" /><path d="M0 9.500h11l1.500-4M9.500 1v4M12 1v4" stroke="#b4b4b4" strokeWidth="1.500" /></Svg></IconButton>
        <span className="ml-[25px] w-[106px] whitespace-nowrap text-[#a0a0a0]">Frame Render Time:</span>
        <span className="w-[51px] text-[#8fd48f]">36ms</span>
        <button type="button" className="h-[17px] w-[134px] rounded-[3px] border border-[#303030] bg-[#1d1d1d] leading-[14px] whitespace-nowrap text-[#8c8c8c]">Toggle Switches / Modes</button>
        <span className="ml-[113px]"><Mountain /></span>
        <span className="relative ml-[10px] flex h-[12px] w-[50px] items-center">
          <span className="absolute right-0 left-[10px] h-[2px] bg-[#333]" />
          <input aria-label="Timeline zoom" type="range" min="0" max="100" defaultValue="0" className="relative h-[12px] w-full appearance-none bg-transparent [&::-webkit-slider-thumb]:h-[10px] [&::-webkit-slider-thumb]:w-[10px] [&::-webkit-slider-thumb]:appearance-none [&::-webkit-slider-thumb]:rounded-full [&::-webkit-slider-thumb]:border-2 [&::-webkit-slider-thumb]:border-[#8c8c8c] [&::-webkit-slider-thumb]:bg-[#232323]" />
        </span>
        <span className="ml-[10px]"><Mountain big /></span>
      </footer>
    </section>
  );
}

export default function App() {
  return (
    <div className="relative flex h-screen flex-col overflow-hidden bg-[#161616] font-['Open_Sans','Noto_Sans',sans-serif] text-[11px] leading-[16px]">
      <TitleBar />
      <MenuBar />
      <ToolBar />
      <main className="mt-[2px] flex min-h-0 flex-1 gap-[4px] pl-[1px]">
        <ProjectPanel />
        <CompositionPanel />
        <RightPanels />
      </main>
      <TimelinePanel />
      <FontPopup />
    </div>
  );
}
